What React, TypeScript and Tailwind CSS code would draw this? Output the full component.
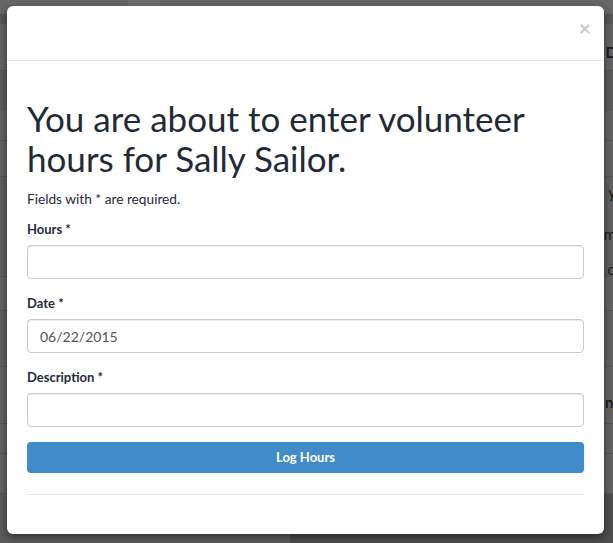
import React from "react";

function Field({ label, value }: { label: string; value?: string }) {
  return (
    <div className="flex flex-col">
      <label className="text-[13px] font-bold leading-[18px] text-[#1f2b38] mb-[7px]">
        {label} <span>*</span>
      </label>
      <div className="h-[34px] rounded-[4px] border border-[#cccccc] bg-white px-[12px] flex items-center text-[14px] text-[#555555] shadow-[inset_0_1px_1px_rgba(0,0,0,0.075)]">
        {value}
      </div>
    </div>
  );
}

export default function App() {
  return (
    <div
      className="relative w-[613px] h-[543px] overflow-hidden bg-[#5e5e5e]"
      style={{ fontFamily: "Lato, 'Noto Sans', sans-serif" }}
    >
      {/* dimmed background page */}
      <div className="flex flex-col">
        <div className="h-[14px] bg-[#676767] flex">
          <div className="w-[128px]" />
          <div className="w-[32px] bg-[#6f6f6f]" />
        </div>
        <div className="h-[10px] bg-[#585858]" />
        <div className="h-[47px] bg-[#646464] border-b border-[#555] flex justify-end items-center pr-0">
          <span className="text-[15px] font-bold text-[#1c1c1c] mr-[-4px] mt-[10px]">D</span>
        </div>
        <div className="h-[40px] bg-[#5c5c5c]" />
        <div className="h-[30px] bg-[#646464] border-b border-[#555]" />
        <div className="h-[36px] bg-[#646464] border-b border-[#555]" />
        <div className="h-[100px] bg-[#606060] border-b border-[#555] flex flex-col items-end pt-[4px]">
          <span className="text-[15px] leading-[22px] text-[#1c1c1c] mr-[-3px]">y</span>
          <span className="text-[15px] leading-[22px] text-[#1c1c1c] mr-[-3px] mt-[20px]">m</span>
          <span className="text-[15px] leading-[22px] text-[#1c1c1c] mr-[-3px] mt-[13px]">o</span>
        </div>
        <div className="h-[34px] bg-[#646464] border-b border-[#555]" />
        <div className="h-[56px] bg-[#626262] border-b border-[#555]" />
        <div className="h-[57px] bg-[#646464] border-b border-[#555] flex justify-end items-center pt-[14px]">
          <span className="text-[15px] font-bold text-[#1c1c1c] mr-[-6px]">nt</span>
        </div>
        <div className="h-[30px] bg-[#646464] border-b border-[#555]" />
        <div className="h-[40px] bg-[#646464] border-b border-[#555]" />
        <div className="flex h-[60px]">
          <div className="w-[290px] bg-[#5c5c5c]" />
          <div className="flex-1 bg-[#4e4e4e]" />
        </div>
      </div>

      {/* modal */}
      <div className="absolute left-[7px] top-[6px] w-[597px] h-[528px] bg-white rounded-[6px] shadow-[0_3px_9px_rgba(0,0,0,0.5)] flex flex-col">
        <div className="h-[55px] border-b border-[#e5e5e5] flex justify-end items-start pr-[13px] pt-[11px]">
          <span className="text-[21px] font-bold leading-none text-[#000] opacity-20">×</span>
        </div>
        <div className="px-[20px] pt-[38px] flex flex-col">
          <h1 className="text-[35px] leading-[39.6px] text-[#1f2b38] font-normal">
            You are about to enter volunteer hours for Sally Sailor.
          </h1>
          <p className="text-[13.7px] leading-[18px] text-[#1f2b38] mt-[12px]">
            Fields with * are required.
          </p>
          <div className="mt-[12px] flex flex-col gap-[15px]">
            <Field label="Hours" />
            <Field label="Date" value="06/22/2015" />
            <Field label="Description" />
          </div>
          <button className="mt-[15px] h-[31px] rounded-[4px] bg-[#428bca] text-white text-[13px] font-bold">
            Log Hours
          </button>
          <div className="mt-[21px] border-t border-[#e5e5e5]" />
        </div>
      </div>
    </div>
  );
}
